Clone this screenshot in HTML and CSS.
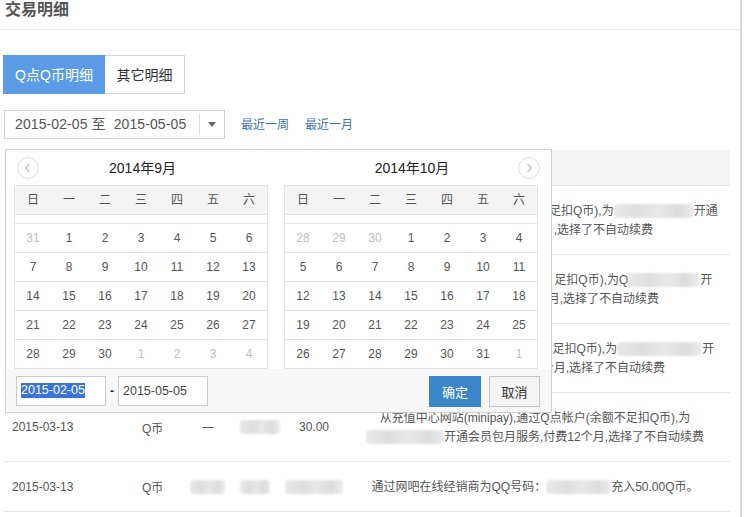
FILE: index.html
```html
<!DOCTYPE html>
<html lang="zh-CN">
<head>
<meta charset="utf-8">
<title>交易明细</title>
<link rel="stylesheet" href="styles.css">
</head>
<body>
<div class="page">
  <div class="title">交易明细</div>

  <div class="tabs">
    <div class="tab tab-active">Q点Q币明细</div>
    <div class="tab tab-other">其它明细</div>
  </div>

  <div class="filter">
    <div class="range">
      <div class="range-text">2015-02-05 至&nbsp;&nbsp;2015-05-05</div>
      <div class="range-sep"></div>
      <div class="range-arrow"><span class="caret"></span></div>
    </div>
    <a class="quick" href="#">最近一周</a>
    <a class="quick" href="#">最近一月</a>
  </div>

  <div class="table">
    <div class="thead">
      <div class="c1 covered">日期</div><div class="c2 covered">类型</div><div class="c3 covered">收支</div><div class="c4 covered">数量</div><div class="c5 covered">余额</div><div class="c6 covered">说明</div>
    </div>
    <div class="row">
      <div class="c1 covered">2015-03-13</div><div class="c2 covered">Q币</div><div class="c3 covered">一</div><div class="c4"><span class="blur w40 covered"></span></div><div class="c5 covered">30.00</div>
      <div class="c6"><span class="covered">从充值中心网站,通过Q点帐户(余额不</span>足扣Q币),为<span class="blur w80"></span>开通<br><span class="covered">会员包月服务,付费12个月</span>,选择了不自动续费</div>
    </div>
    <div class="row">
      <div class="c1 covered">2015-03-13</div><div class="c2 covered">Q币</div><div class="c3 covered">一</div><div class="c4"><span class="blur w40 covered"></span></div><div class="c5 covered">30.00</div>
      <div class="c6"><span class="covered">从充值中心网站,通过Q点帐户(余额不</span>足扣Q币),为Q<span class="blur w72"></span>开<br><span class="covered">通会员包月服务,付费12个</span>月,选择了不自动续费</div>
    </div>
    <div class="row">
      <div class="c1 covered">2015-03-13</div><div class="c2 covered">Q币</div><div class="c3 covered">一</div><div class="c4"><span class="blur w40 covered"></span></div><div class="c5 covered">30.00</div>
      <div class="c6"><span class="covered">从充值中心网站,通过Q点帐户(余额不</span>足扣Q币),为<span class="blur w85"></span>开<br><span class="covered">开通会员包月服务,付费12</span>个月,选择了不自动续费</div>
    </div>
    <div class="row">
      <div class="c1">2015-03-13</div><div class="c2">Q币</div><div class="c3">一</div><div class="c4"><span class="blur w40"></span></div><div class="c5">30.00</div>
      <div class="c6">从充值中心网站(minipay),通过Q点帐户(余额不足扣Q币),为<br><span class="blur w78"></span>开通会员包月服务,付费12个月,选择了不自动续费</div>
    </div>
    <div class="row row-short">
      <div class="c1">2015-03-13</div><div class="c2">Q币</div><div class="c3 flush"><span class="blur w35"></span></div><div class="c4"><span class="blur w30"></span></div><div class="c5 flush"><span class="blur w58"></span></div>
      <div class="c6">通过网吧在线经销商为QQ号码：<span class="blur w65"></span>充入50.00Q币。</div>
    </div>
  </div>

  <div class="picker">
    <div class="months">
      <div class="cal cal-left">
        <div class="cal-head">
          <span class="nav">
            <svg width="22" height="22" viewBox="0 0 22 22"><circle cx="11" cy="11" r="10.5" fill="#fff" stroke="#dedede"/><path d="M12.5 7 L8.8 11 L12.5 15" fill="none" stroke="#c8c8c8" stroke-width="1.6"/></svg>
          </span>
          <span class="cal-title">2014年9月</span>
          <span></span>
        </div>
        <div class="grid">
          <div class="wk"><span>日</span><span>一</span><span>二</span><span>三</span><span>四</span><span>五</span><span>六</span></div>
          <div class="spacer"></div>
          <div class="week"><span class="o">31</span><span>1</span><span>2</span><span>3</span><span>4</span><span>5</span><span>6</span></div>
          <div class="week"><span>7</span><span>8</span><span>9</span><span>10</span><span>11</span><span>12</span><span>13</span></div>
          <div class="week"><span>14</span><span>15</span><span>16</span><span>17</span><span>18</span><span>19</span><span>20</span></div>
          <div class="week"><span>21</span><span>22</span><span>23</span><span>24</span><span>25</span><span>26</span><span>27</span></div>
          <div class="week"><span>28</span><span>29</span><span>30</span><span class="o">1</span><span class="o">2</span><span class="o">3</span><span class="o">4</span></div>
        </div>
      </div>
      <div class="cal cal-right">
        <div class="cal-head">
          <span></span>
          <span class="cal-title">2014年10月</span>
          <span class="nav">
            <svg width="22" height="22" viewBox="0 0 22 22"><circle cx="11" cy="11" r="10.5" fill="#fff" stroke="#dedede"/><path d="M9.5 7 L13.2 11 L9.5 15" fill="none" stroke="#c8c8c8" stroke-width="1.6"/></svg>
          </span>
        </div>
        <div class="grid">
          <div class="wk"><span>日</span><span>一</span><span>二</span><span>三</span><span>四</span><span>五</span><span>六</span></div>
          <div class="spacer"></div>
          <div class="week"><span class="o">28</span><span class="o">29</span><span class="o">30</span><span>1</span><span>2</span><span>3</span><span>4</span></div>
          <div class="week"><span>5</span><span>6</span><span>7</span><span>8</span><span>9</span><span>10</span><span>11</span></div>
          <div class="week"><span>12</span><span>13</span><span>14</span><span>15</span><span>16</span><span>17</span><span>18</span></div>
          <div class="week"><span>19</span><span>20</span><span>21</span><span>22</span><span>23</span><span>24</span><span>25</span></div>
          <div class="week"><span>26</span><span>27</span><span>28</span><span>29</span><span>30</span><span>31</span><span class="o">1</span></div>
        </div>
      </div>
    </div>
    <div class="picker-foot">
      <div class="inp"><span class="sel">2015-02-05</span></div>
      <span class="dash">-</span>
      <div class="inp">2015-05-05</div>
      <div class="btns">
        <span class="btn btn-ok">确定</span>
        <span class="btn btn-cancel">取消</span>
      </div>
    </div>
  </div>
</div>
</body>
</html>
```

FILE: styles.css
```css
html, body {
  margin: 0;
  padding: 0;
  background: #fff;
}

body {
  font-family: "Liberation Sans", "Noto Sans CJK SC", sans-serif;
  color: #555;
}

.page {
  position: relative;
  width: 742px;
  min-height: 517px;
  box-sizing: border-box;
  border-right: 2px solid #d9d9d9;
}

.title {
  height: 29px;
  border-bottom: 1px solid #e8e8e8;
  padding-left: 5px;
  font-size: 16px;
  font-weight: bold;
  line-height: 20px;
  color: #555;
}

/* tabs */
.tabs {
  display: flex;
  margin: 25px 0 0 3px;
}

.tab {
  height: 39px;
  box-sizing: border-box;
  display: flex;
  align-items: center;
  justify-content: center;
  font-size: 14px;
  line-height: 16px;
}

.tab-active {
  width: 102px;
  background: #5c9ce6;
  color: #fff;
}

.tab-other {
  width: 80px;
  border: 1px solid #d5d5d5;
  border-left: none;
  background: #fff;
  color: #333;
}

/* filter */
.filter {
  display: flex;
  align-items: center;
  height: 29px;
  margin: 16px 0 0 4px;
}

.range {
  width: 221px;
  height: 29px;
  box-sizing: border-box;
  border: 1px solid #d2d2d2;
  display: flex;
  align-items: center;
  background: #fff;
}

.range-text {
  flex: 1;
  padding-left: 10px;
  font-size: 14px;
  line-height: 27px;
  letter-spacing: 0.1px;
  white-space: nowrap;
  color: #555;
}

.range-sep {
  width: 1px;
  height: 21px;
  background: #dcdcdc;
}

.range-arrow {
  width: 24px;
  display: flex;
  justify-content: center;
}

.caret {
  width: 0;
  height: 0;
  border-left: 4px solid transparent;
  border-right: 4px solid transparent;
  border-top: 5px solid #666;
}

.quick {
  margin-left: 16px;
  font-size: 12px;
  line-height: 14px;
  color: #3f73b8;
  text-decoration: none;
}

/* table */
.table {
  width: 726px;
  margin: 11px 0 0 4px;
  font-size: 12px;
  color: #555;
}

.thead,
.row {
  display: grid;
  grid-template-columns: 126px 60px 45px 50px 55px 390px;
  align-items: center;
  box-sizing: border-box;
  border-bottom: 1px solid #e6e6e6;
}

.thead {
  height: 36px;
  background: #f3f3f3;
}

.row {
  height: 69px;
}

.row-short {
  height: 50px;
}

.c1 { padding-left: 8px; }
.c2 { padding-left: 12px; }
.c3 { padding-left: 12px; }
.c4 { padding-left: 5px; }
.c5 { padding-left: 14px; }
.c6 {
  text-align: center;
  line-height: 19px;
  padding-top: 2px;
  white-space: nowrap;
}

.flush { padding-left: 0; }

/* parts of the list that sit under the open date picker */
.covered { visibility: hidden; }

.blur {
  display: inline-block;
  height: 14px;
  vertical-align: -3px;
  border-radius: 4px;
  background: linear-gradient(90deg, #e9e9e9 0%, #dedede 30%, #e8e8e8 55%, #dcdcdc 80%, #ececec 100%);
  filter: blur(1.2px);
}

.w30 { width: 30px; }
.w35 { width: 35px; }
.w40 { width: 40px; }
.w58 { width: 58px; }
.w65 { width: 65px; }
.w72 { width: 72px; }
.w78 { width: 78px; }
.w80 { width: 80px; }
.w85 { width: 85px; }

/* date picker popup */
.picker {
  position: absolute;
  left: 5px;
  top: 149px;
  width: 547px;
  height: 264px;
  box-sizing: border-box;
  border: 1px solid #cfcfcf;
  background: #fff;
}

.months {
  display: flex;
  gap: 16px;
  padding-left: 8px;
}

.cal {
  width: 254px;
}

.cal-head {
  height: 35px;
  display: grid;
  grid-template-columns: 22px 1fr 22px;
  align-items: center;
}

.cal-left .cal-head {
  padding-left: 3px;
}

.cal-right .cal-head {
  margin-right: -2px;
}

.nav {
  display: flex;
  width: 22px;
  height: 22px;
}

.cal-title {
  text-align: center;
  font-size: 14px;
  line-height: 16px;
  color: #222;
}

.grid {
  border: 1px solid #e3e3e3;
  border-bottom: none;
}

.wk,
.week {
  display: grid;
  grid-template-columns: repeat(7, 1fr);
  align-items: center;
  text-align: center;
  box-sizing: border-box;
  height: 29px;
  border-bottom: 1px solid #e3e3e3;
  font-size: 12px;
  line-height: 14px;
}

.wk {
  background: #f3f3f3;
  color: #555;
}

.spacer {
  height: 9px;
  box-sizing: border-box;
  border-bottom: 1px solid #e3e3e3;
}

.week {
  color: #555;
}

.week .o {
  color: #bdbdbd;
}

.picker-foot {
  height: 43px;
  display: flex;
  align-items: center;
  padding: 0 11px 0 10px;
  background: #f7f7f7;
}

.inp {
  width: 90px;
  height: 30px;
  box-sizing: border-box;
  border: 1px solid #cccccc;
  background: #fff;
  padding-left: 4px;
  display: flex;
  align-items: center;
  font-size: 12.5px;
  color: #444;
}

.sel {
  background: #3875d7;
  color: #fff;
  line-height: 15px;
}

.dash {
  width: 12px;
  text-align: center;
  font-size: 12px;
  font-weight: bold;
  color: #222;
}

.btns {
  margin-left: auto;
  display: flex;
  gap: 8px;
  margin-top: 2px;
}

.btn {
  width: 52px;
  height: 31px;
  box-sizing: border-box;
  display: flex;
  align-items: center;
  justify-content: center;
  font-size: 13px;
}

.btn-ok {
  background: #3a86c8;
  border: 1px solid #3a86c8;
  color: #fff;
}

.btn-cancel {
  width: 51px;
  background: #f3f3f3;
  border: 1px solid #c6c6c6;
  color: #333;
}
```
